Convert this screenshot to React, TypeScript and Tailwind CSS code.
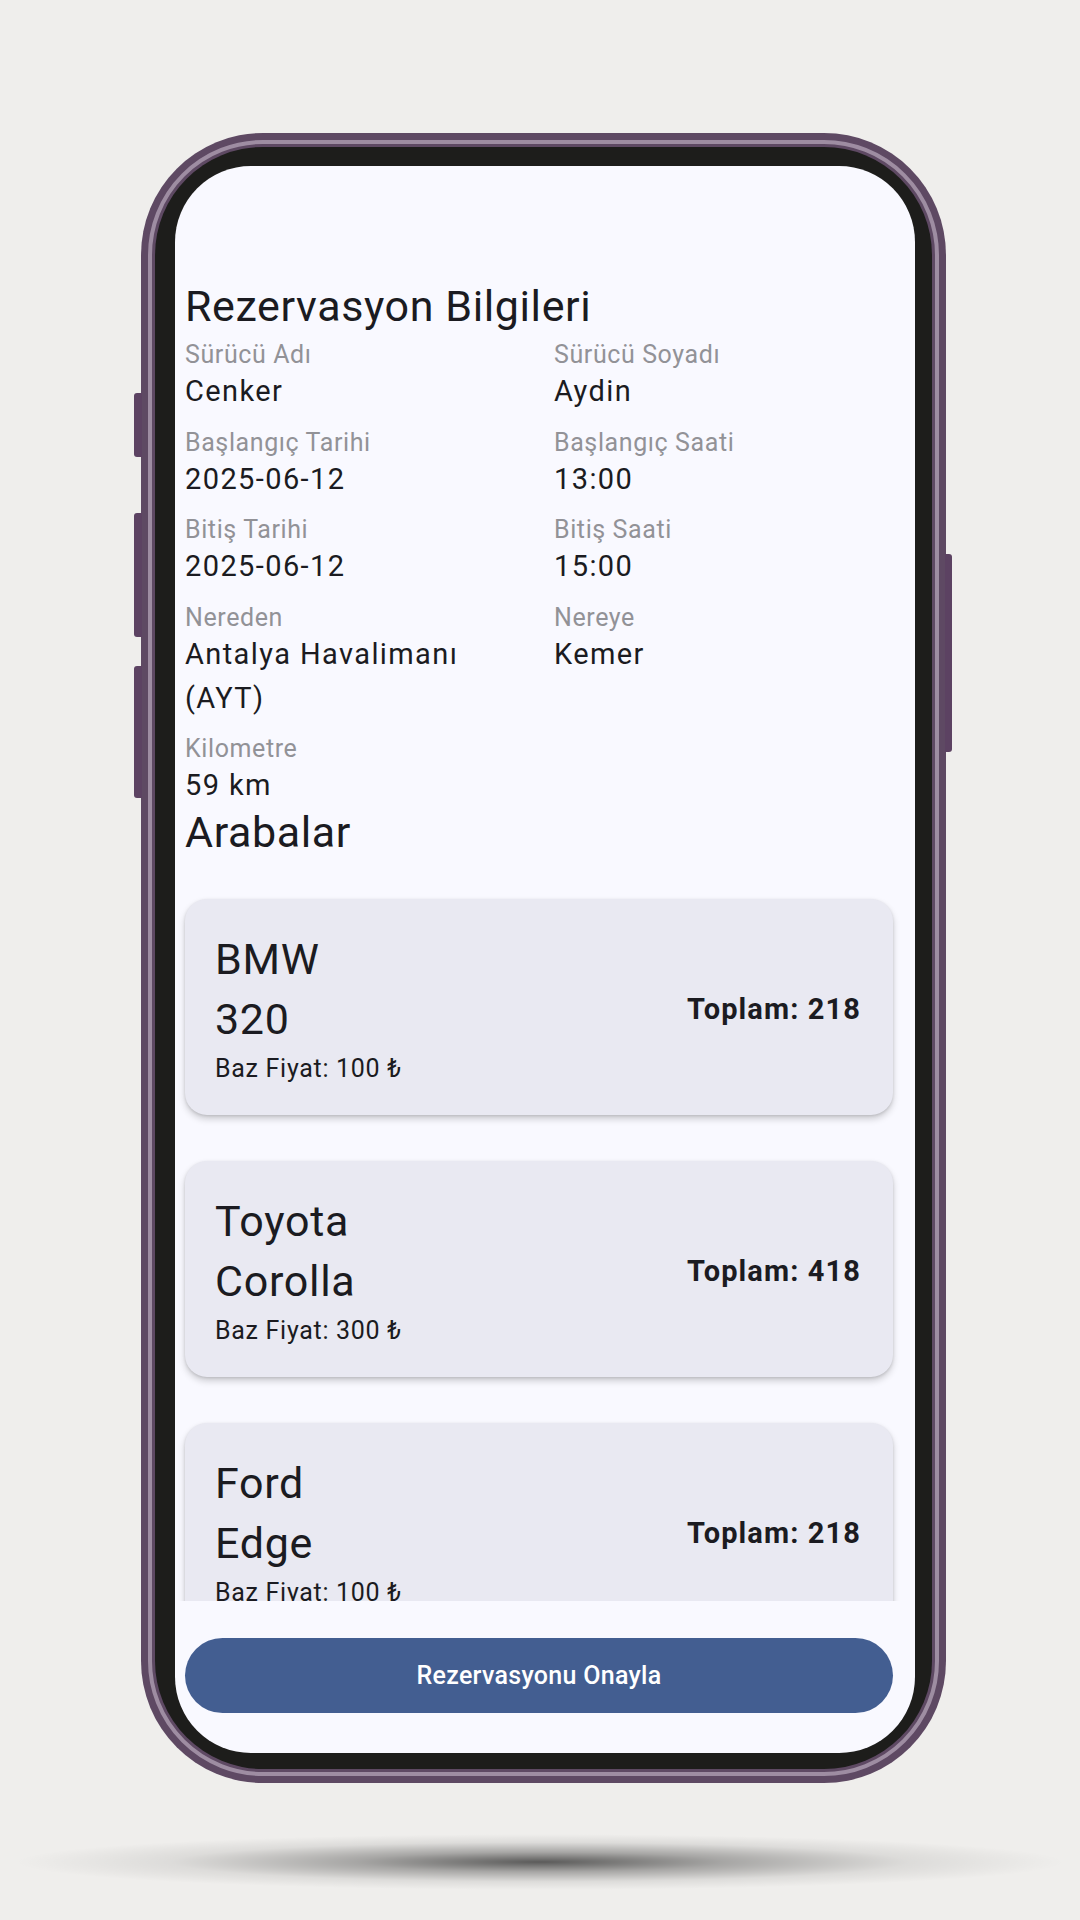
import type { ReactNode } from "react";

type Car = { brand: string; model: string; base: number; total: number };

const cars: Car[] = [
  { brand: "BMW", model: "320", base: 100, total: 218 },
  { brand: "Toyota", model: "Corolla", base: 300, total: 418 },
  { brand: "Ford", model: "Edge", base: 100, total: 218 },
];

function Field({ label, children }: { label: string; children: ReactNode }) {
  return (
    <div className="flex flex-col">
      <span className="text-[25px] leading-[29px] tracking-[0.6px] text-[#929297]">{label}</span>
      <span className="text-[29px] leading-[44px] tracking-[1.4px] text-[#1b1b21]">{children}</span>
    </div>
  );
}

function CarCard({ car }: { car: Car }) {
  return (
    <div className="flex shrink-0 items-center justify-between rounded-[22px] bg-[#e9e9f2] pt-[30px] pb-[32px] pl-[30px] pr-[32px] shadow-[0_4px_7px_rgba(0,0,0,0.18),0_1px_3px_rgba(0,0,0,0.12)]">
      <div className="flex flex-col">
        <div className="text-[43px] leading-[60px] tracking-[0.7px] text-[#1b1b21]">
          <div>{car.brand}</div>
          <div>{car.model}</div>
        </div>
        <div className="mt-[5px] text-[25px] leading-[29px] tracking-[0.7px] text-[#1b1b21]">
          Baz Fiyat: {car.base} ₺
        </div>
      </div>
      <div className="mt-[8px] text-[29px] font-bold tracking-[1.1px] text-[#1b1b21]">Toplam: {car.total}</div>
    </div>
  );
}

export default function App() {
  return (
    <div
      className="min-h-[1920px] w-[1080px] bg-[#efeeec] pt-[133px]"
      style={{ fontFamily: "Roboto, 'Noto Sans', sans-serif" }}
    >
      <div className="relative ml-[141px] w-[805px]">
        {/* side buttons */}
        <div className="absolute left-[-7px] top-[260px] h-[64px] w-[8px] rounded-l-[3px] bg-[#5c4262]" />
        <div className="absolute left-[-7px] top-[380px] h-[124px] w-[8px] rounded-l-[3px] bg-[#5c4262]" />
        <div className="absolute left-[-7px] top-[533px] h-[132px] w-[8px] rounded-l-[3px] bg-[#5c4262]" />
        <div className="absolute right-[-6px] top-[421px] h-[198px] w-[7px] rounded-r-[3px] bg-[#5c4262]" />

        <div className="rounded-[122px] bg-[#5e4963] p-[7px]">
          <div className="rounded-[115px] border-[4px] border-[#9e8da2] bg-[#5e4963] p-[3px]">
            <div className="rounded-[108px] bg-[#1d1d1b] pl-[20px] pr-[17px] pt-[19px] pb-[16px]">
              <div className="flex h-[1587px] w-[740px] flex-col overflow-hidden rounded-[76px] bg-[#f9f9ff]">
                <div className="flex-1 overflow-hidden pl-[10px] pr-[22px] pt-[115px]">
                  <h1 className="text-[43px] leading-[50px] tracking-[0.6px] text-[#1b1b21]">Rezervasyon Bilgileri</h1>
                  <div className="mt-[9px] grid grid-cols-[339px_1fr] gap-x-[30px] gap-y-[14.5px]">
                    <Field label="Sürücü Adı">Cenker</Field>
                    <Field label="Sürücü Soyadı">Aydin</Field>
                    <Field label="Başlangıç Tarihi">2025-06-12</Field>
                    <Field label="Başlangıç Saati">13:00</Field>
                    <Field label="Bitiş Tarihi">2025-06-12</Field>
                    <Field label="Bitiş Saati">15:00</Field>
                    <Field label="Nereden">Antalya Havalimanı (AYT)</Field>
                    <Field label="Nereye">Kemer</Field>
                    <Field label="Kilometre">59 km</Field>
                  </div>
                  <h2 className="text-[43px] leading-[50px] tracking-[0.6px] text-[#1b1b21]">Arabalar</h2>
                  <div className="flex flex-col gap-[46px] pt-[42px]">
                    {cars.map((c) => (
                      <CarCard key={c.brand} car={c} />
                    ))}
                  </div>
                </div>
                <div className="pl-[10px] pr-[22px] pt-[37px] pb-[40px]">
                  <button className="flex h-[75px] w-full items-center justify-center rounded-full bg-[#435e91] text-[25px] font-medium tracking-[0.3px] text-white">
                    Rezervasyonu Onayla
                  </button>
                </div>
              </div>
            </div>
          </div>
        </div>
      </div>
      <div className="ml-[15px] mt-[51px] h-[56px] w-[1050px] bg-[radial-gradient(closest-side,rgba(0,0,0,0.62),rgba(0,0,0,0.3)_35%,rgba(0,0,0,0.08)_70%,transparent)]" />
    </div>
  );
}
